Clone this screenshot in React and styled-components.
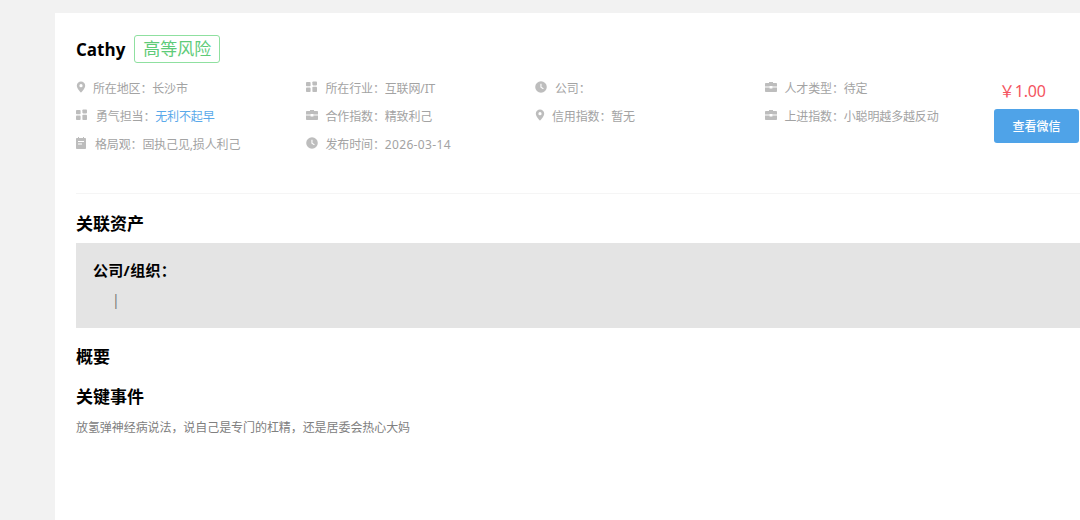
import React from 'react';
import styled, { createGlobalStyle } from 'styled-components';

const GlobalStyle = createGlobalStyle`
  html, body {
    margin: 0;
    padding: 0;
    height: 100%;
    background: #f2f2f2;
    font-family: "Noto Sans", "Noto Sans CJK SC", sans-serif;
  }
`;

const icons = {
  pin: <path fillRule="evenodd" d="M5 0.5a4.2 4.2 0 0 0-4.2 4.2C0.8 7.6 5 11.5 5 11.5s4.2-3.9 4.2-6.8A4.2 4.2 0 0 0 5 .5zm0 5.8a1.6 1.6 0 1 1 0-3.2 1.6 1.6 0 0 1 0 3.2z" />,
  grid: (
    <>
      <rect x="0" y="1" width="4.6" height="4.2" rx="0.8" />
      <rect x="6.4" y="0.4" width="4.6" height="4" rx="0.8" />
      <rect x="0" y="6.6" width="4.6" height="4.4" rx="0.8" />
      <rect x="6.4" y="5.800" width="4.6" height="5.200" rx="0.8" />
    </>
  ),
  case: <path fillRule="evenodd" d="M4 2V1h4v1h3.200c.5 0 .8.3.8.800V5.600H7.400v-.7H4.600v.7H0V2.800c0-.5.3-.8.8-.8H4zm1-.1V2h2v-.1H5zM0 6.600h4.600v.8h2.800v-.8H12v3.600c0 .5-.3.8-.8.8H.8c-.5 0-.8-.3-.8-.8V6.600z" />,
  clock: <path fillRule="evenodd" d="M6 .2a5.800 5.800 0 1 1 0 11.600A5.800 5.800 0 0 1 6 .2zM5.400 2.800v3.700l2.700 1.700.6-.9-2.200-1.400V2.800H5.400z" />,
  note: <path fillRule="evenodd" d="M2 0h1v1h4V0h1v1h1.200c.5 0 .8.3.8.800v9.400c0 .5-.3.8-.8.8H.8c-.5 0-.8-.3-.8-.8V1.800c0-.5.3-.8.8-.8H2V0zM2 4v1h6V4H2zm0 2.500v1h4v-1H2z" />,
};

const infoItems = [
  { icon: 'pin', gap: 5, label: '所在地区：', value: '长沙市' },
  { icon: 'grid', gap: 8, label: '所在行业：', value: '互联网/IT' },
  { icon: 'clock', gap: 8, label: '公司：', value: '' },
  { icon: 'case', gap: 8, label: '人才类型：', value: '待定' },
  { icon: 'grid', gap: 8, label: '勇气担当：', value: '无利不起早', link: true },
  { icon: 'case', gap: 8, label: '合作指数：', value: '精致利己' },
  { icon: 'pin', gap: 5, label: '信用指数：', value: '暂无' },
  { icon: 'case', gap: 8, label: '上进指数：', value: '小聪明越多越反动' },
  { icon: 'note', gap: 7, label: '格局观：', value: '固执己见,损人利己' },
  { icon: 'clock', gap: 8, label: '发布时间：', value: '2026-03-14', wide: true },
];

const App = () => (
  <Page>
    <GlobalStyle />
    <Card>
      <Header>
        <Main>
          <TitleRow>
            <Name>Cathy</Name>
            <RiskTag>高等风险</RiskTag>
          </TitleRow>
          <InfoGrid>
            {infoItems.map((item) => (
              <InfoItem key={item.label} $gap={item.gap}>
                <Icon viewBox="0 0 12 12">{icons[item.icon]}</Icon>
                <span>
                  {item.label}
                  <Value $link={item.link} $wide={item.wide}>{item.value}</Value>
                </span>
              </InfoItem>
            ))}
          </InfoGrid>
        </Main>
        <Aside>
          <Price>￥1.00</Price>
          <WechatButton>查看微信</WechatButton>
        </Aside>
      </Header>
      <Divider />
      <SectionTitle>关联资产</SectionTitle>
      <AssetBox>
        <AssetTitle>公司/组织：</AssetTitle>
        <AssetValue>|</AssetValue>
      </AssetBox>
      <SummaryTitle>概要</SummaryTitle>
      <EventTitle>关键事件</EventTitle>
      <EventText>放氢弹神经病说法，说自己是专门的杠精，还是居委会热心大妈</EventText>
    </Card>
  </Page>
);

const Page = styled.div`
  height: 520px;
  overflow: hidden;
  padding: 13px 0 0 55px;
  box-sizing: border-box;
`;

const Card = styled.div`
  height: 507px;
  padding: 22px 0 0 21px;
  background: #fff;
  box-sizing: border-box;
`;

const Header = styled.div`
  display: flex;
  height: 158px;
`;

const Main = styled.div`
  width: 918px;
`;

const TitleRow = styled.div`
  display: flex;
  align-items: center;
  gap: 9px;
  height: 28px;
`;

const Name = styled.span`
  font-family: "Open Sans", "Noto Sans", sans-serif;
  font-size: 17px;
  font-weight: 700;
  color: #000;
`;

const RiskTag = styled.span`
  display: flex;
  align-items: center;
  justify-content: center;
  width: 86px;
  height: 28px;
  border: 1px solid #8fe0a0;
  border-radius: 3px;
  box-sizing: border-box;
  font-size: 17px;
  line-height: 24px;
  color: #5ecb78;
`;

const InfoGrid = styled.div`
  display: grid;
  grid-template-columns: repeat(4, 229.5px);
  grid-auto-rows: 28px;
  margin-top: 11px;
`;

const InfoItem = styled.div`
  display: flex;
  align-items: center;
  gap: ${(p) => p.$gap}px;
  font-size: 12px;
  letter-spacing: -0.15px;
  color: #a3a3a3;
  white-space: nowrap;
`;

const Icon = styled.svg`
  width: 12px;
  height: 12px;
  margin-top: -2px;
  flex-shrink: 0;
  fill: #bdbdbd;
`;

const Value = styled.span`
  color: ${(p) => (p.$link ? '#5aa9ea' : '#a3a3a3')};
  letter-spacing: ${(p) => (p.$wide ? '0.35px' : 'inherit')};
`;

const Aside = styled.div`
  width: 85px;
  padding-top: 44px;
`;

const Price = styled.div`
  height: 30px;
  padding-left: 5px;
  font-size: 16px;
  line-height: 24px;
  letter-spacing: -0.2px;
  color: #f4555f;
  white-space: nowrap;
`;

const WechatButton = styled.button`
  display: block;
  width: 85px;
  height: 34px;
  padding: 0;
  border: 0;
  border-radius: 3px;
  background: #4fa3e8;
  color: #fff;
  font-family: inherit;
  font-size: 12px;
  font-weight: 500;
`;

const Divider = styled.div`
  height: 1px;
  background: #f5f5f5;
`;

const SectionTitle = styled.h3`
  margin: 18px 0 0;
  height: 24px;
  font-size: 17px;
  line-height: 24px;
  font-weight: 700;
  color: #000;
`;

const AssetBox = styled.div`
  height: 85px;
  margin-top: 7px;
  padding: 15px 17px 0;
  background: #e4e4e4;
  box-sizing: border-box;
`;

const AssetTitle = styled.div`
  font-size: 15px;
  line-height: 24px;
  letter-spacing: 0.3px;
  font-weight: 700;
  color: #000;
`;

const AssetValue = styled.div`
  margin: 8px 0 0 19px;
  font-size: 14px;
  line-height: 20px;
  color: #777;
`;

const SummaryTitle = styled(SectionTitle)`
  margin-top: 17px;
`;

const EventTitle = styled(SectionTitle)`
  margin-top: 16px;
`;

const EventText = styled.p`
  margin: 9px 0 0;
  font-size: 12px;
  line-height: 20px;
  letter-spacing: -0.07px;
  color: #808080;
`;

export default App;
